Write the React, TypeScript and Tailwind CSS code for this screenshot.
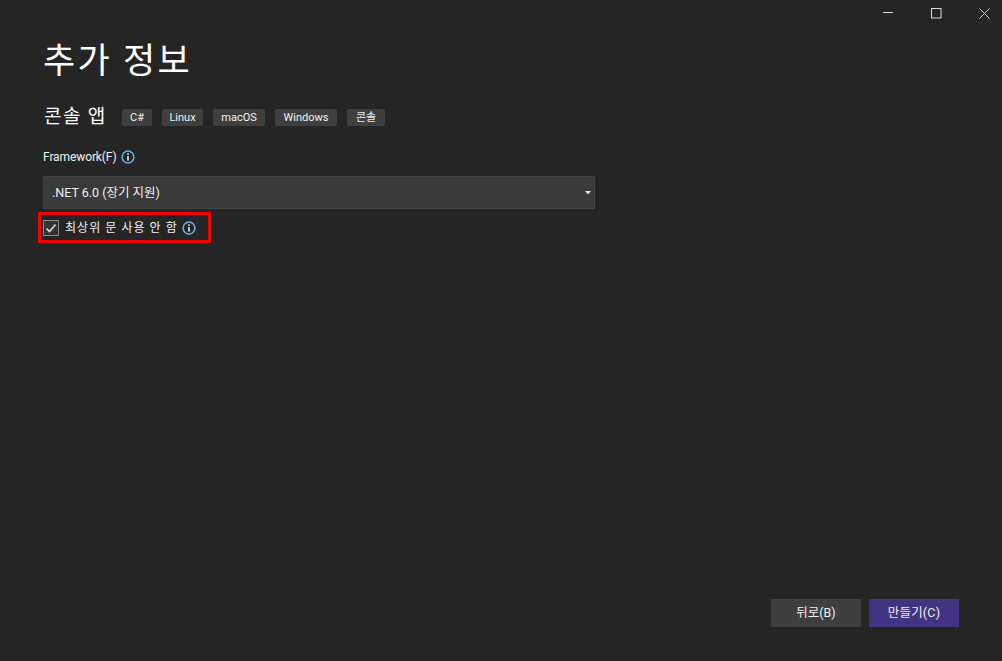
import React from 'react';

const FONT = "font-['Roboto','Noto_Sans_CJK_KR',sans-serif]";

const InfoIcon = ({ className }: { className?: string }) => (
  <svg viewBox="0 0 14 14" className={className} fill="none">
    <circle cx="7" cy="7" r="5.9" stroke="#5DB7E8" strokeWidth="1.5" />
    <rect x="6.2" y="6" width="1.6" height="4.6" fill="#E8E8E8" />
    <rect x="6.2" y="3.4" width="1.6" height="1.6" fill="#E8E8E8" />
  </svg>
);

const tags = [
  { label: 'C#', width: 'w-[30px]' },
  { label: 'Linux', width: 'w-[41px]' },
  { label: 'macOS', width: 'w-[52px]' },
  { label: 'Windows', width: 'w-[62px]' },
  { label: '콘솔', width: 'w-[38px]' },
];

const App = () => {
  return (
    <div className={`w-[1002px] h-[661px] bg-[#252526] text-white flex flex-col overflow-hidden ${FONT}`}>
      {/* window buttons */}
      <div className="h-[26px] flex items-center justify-end pr-[12px]">
        <svg width="11" height="11" viewBox="0 0 11 11" className="mr-[37px]">
          <rect x="0" y="4" width="10" height="1" fill="#DDDDDD" />
        </svg>
        <svg width="11" height="11" viewBox="0 0 11 11" className="mr-[37px]">
          <rect x="0.5" y="0.5" width="9.5" height="9.5" fill="none" stroke="#DDDDDD" strokeWidth="1" />
        </svg>
        <svg width="11" height="11" viewBox="0 0 11 11">
          <path d="M0.5 0.5L10.5 10.5M10.5 0.5L0.5 10.5" stroke="#C8C8C8" strokeWidth="1" />
        </svg>
      </div>

      <div className="flex-1 pl-[43px] flex flex-col">
        <h1 className="text-[35px] leading-[52px] mt-[10px] tracking-[2.3px] font-normal">추가 정보</h1>

        <div className="flex items-center mt-[15px] h-[29px]">
          <span className="text-[19px] tracking-[1.4px] w-[79px] pl-[1px]">콘솔 앱</span>
          <div className="flex gap-[10px]">
            {tags.map((t) => (
              <span
                key={t.label}
                className={`h-[17px] rounded-[2px] bg-[#3F3F40] text-center text-[11px] leading-[17px] text-[#F1F1F1] ${t.width}`}
              >
                {t.label}
              </span>
            ))}
          </div>
        </div>

        <div className="flex items-center gap-[5px] mt-[15px] h-[20px]">
          <span className="text-[12px] tracking-[-0.1px] text-[#F1F1F1]">Framework(F)</span>
          <InfoIcon className="w-[14px] h-[14px]" />
        </div>

        <div className="mt-[9px] w-[552px] h-[33px] bg-[#3A3A3B] border border-[#434346] flex items-center justify-between pl-[8px] pr-[3px]">
          <span className="text-[12.5px] text-[#F1F1F1] pt-[1px]">.NET 6.0 (장기 지원)</span>
          <svg width="6" height="4" viewBox="0 0 6 4">
            <path d="M0 0H6L3 3.5Z" fill="#E0E0E0" />
          </svg>
        </div>

        <div className="mt-[3px] -ml-[5px] w-[173px] h-[31px] border-[3px] border-[#F00000] flex items-center pl-[2px]">
          <span className="w-[16px] h-[16px] bg-[#333334] border border-[#8A8A8A] flex items-center justify-center">
            <svg width="12" height="12" viewBox="0 0 12 12">
              <path d="M1.5 6.5L4.5 9.5L10.5 2.5" fill="none" stroke="#D8D8D8" strokeWidth="1.7" />
            </svg>
          </span>
          <span className="ml-[6px] text-[12px] tracking-[1.05px] text-[#F1F1F1]">최상위 문 사용 안 함</span>
          <InfoIcon className="w-[14px] h-[14px] ml-[4px]" />
        </div>
      </div>

      {/* footer buttons */}
      <div className="flex justify-end gap-[8px] pr-[43px] pb-[34px]">
        <button className="w-[90px] h-[28px] bg-[#3F3F40] text-[12.5px] text-[#F1F1F1]">뒤로(B)</button>
        <button className="w-[90px] h-[28px] bg-[#433483] text-[12.5px] tracking-[0.2px] text-[#F1F1F1]">만들기(C)</button>
      </div>
    </div>
  );
};

export default App;
